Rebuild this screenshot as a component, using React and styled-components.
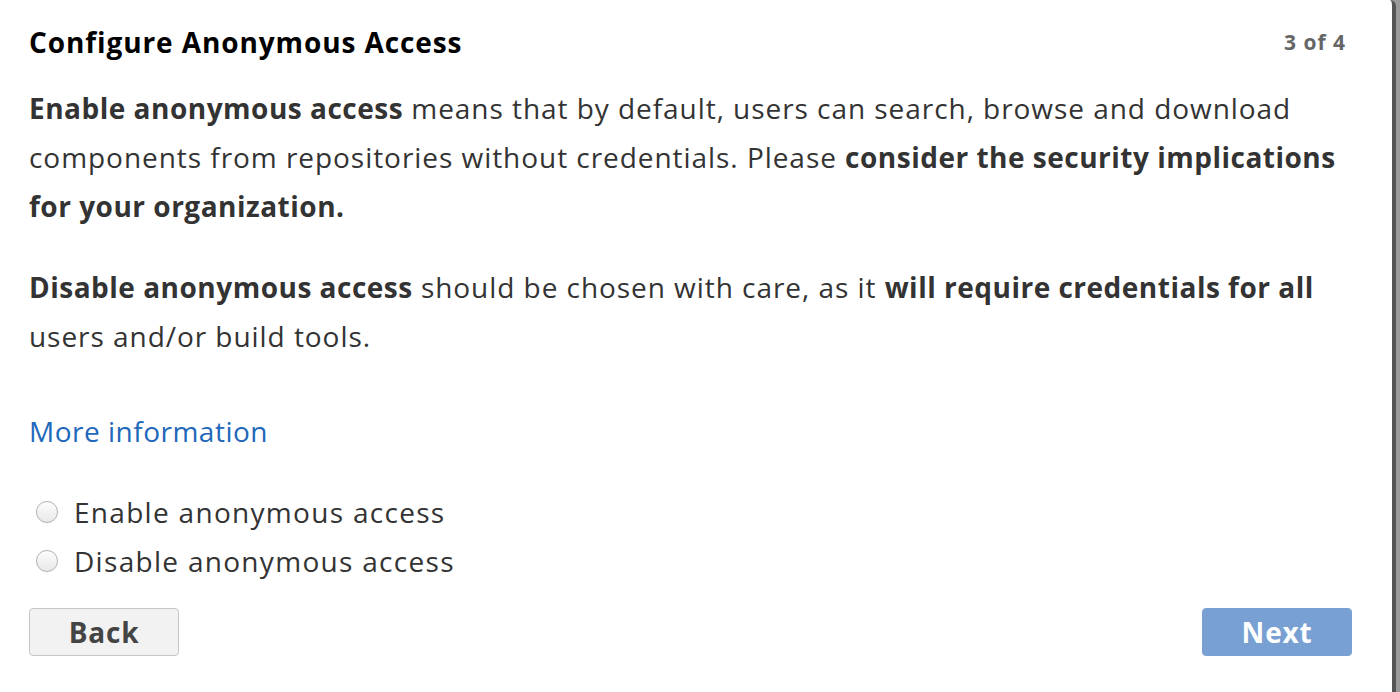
import React from "react";
import styled, { createGlobalStyle } from "styled-components";

const Global = createGlobalStyle`
  html, body { margin: 0; padding: 0; background: #9a9a9a; }
  body { font-family: "Open Sans", Lato, sans-serif; }
`;

const Frame = styled.div`
  width: 1400px;
  height: 692px;
  display: flex;
  background: #9a9a9a;
  overflow: hidden;
`;

const Panel = styled.div`
  width: 1396px;
  height: 692px;
  box-sizing: border-box;
  background: #fff;
  border-right: 4px solid #555;
  border-top-right-radius: 6px;
  padding: 22px 40px 0 29px;
  display: flex;
  flex-direction: column;
`;

const Header = styled.div`
  display: flex;
  justify-content: space-between;
  align-items: center;
  height: 40px;
`;

const Title = styled.h1`
  margin: 0;
  font-size: 28px;
  font-weight: 700;
  color: #000;
  letter-spacing: 0.9px;
`;

const Step = styled.span`
  font-size: 21px;
  font-weight: 700;
  color: #666;
  letter-spacing: 1px;
  margin-right: 6px;
`;

const Para = styled.p`
  margin: ${(p) => p.$top}px 0 0;
  font-size: 28px;
  line-height: 49px;
  letter-spacing: 0.95px;
  color: #333;
  b { font-weight: 700; letter-spacing: 0.5px; }
`;

const Link = styled.a`
  margin-top: 46px;
  font-size: 28px;
  line-height: 49px;
  letter-spacing: 0.5px;
  color: #2167ba;
  text-decoration: none;
  align-self: flex-start;
`;

const Options = styled.div`
  margin-top: 31px;
  display: flex;
  flex-direction: column;
`;

const Option = styled.label`
  display: flex;
  align-items: center;
  height: 49px;
  font-size: 28px;
  letter-spacing: 1.3px;
  color: #333;
  gap: 16px;
  padding-left: 7px;
`;

const Radio = styled.span`
  width: 22px;
  height: 22px;
  border-radius: 50%;
  box-sizing: border-box;
  border: 1px solid #b4b4b4;
  background: linear-gradient(#fdfdfd, #e8e8e8);
  box-shadow: 0 0 1px rgba(0, 0, 0, 0.15), inset 0 1px 1px rgba(255, 255, 255, 0.8);
`;

const Footer = styled.div`
  margin-top: 23px;
  display: flex;
  justify-content: space-between;
`;

const Button = styled.button`
  width: 150px;
  height: 48px;
  box-sizing: border-box;
  border-radius: 4px;
  font-family: inherit;
  font-size: 28px;
  font-weight: 700;
  letter-spacing: 0.8px;
  border: 1px solid ${(p) => (p.$primary ? "#78a0d2" : "#c6c6c6")};
  background: ${(p) => (p.$primary ? "#78a0d2" : "#f2f2f2")};
  color: ${(p) => (p.$primary ? "#fff" : "#444")};
  padding: 0;
`;

export default function App() {
  return (
    <Frame>
      <Global />
      <Panel>
        <Header>
          <Title>Configure Anonymous Access</Title>
          <Step>3 of 4</Step>
        </Header>
        <Para $top={22}>
          <b>Enable anonymous access</b> means that by default, users can search, browse and download
          components from repositories without credentials. Please <b>consider the security implications
          for your organization.</b>
        </Para>
        <Para $top={32}>
          <b>Disable anonymous access</b> should be chosen with care, as it <b>will require credentials for all</b>{" "}
          users and/or build tools.
        </Para>
        <Link href="#">More information</Link>
        <Options>
          <Option><Radio />Enable anonymous access</Option>
          <Option><Radio />Disable anonymous access</Option>
        </Options>
        <Footer>
          <Button>Back</Button>
          <Button $primary>Next</Button>
        </Footer>
      </Panel>
    </Frame>
  );
}
